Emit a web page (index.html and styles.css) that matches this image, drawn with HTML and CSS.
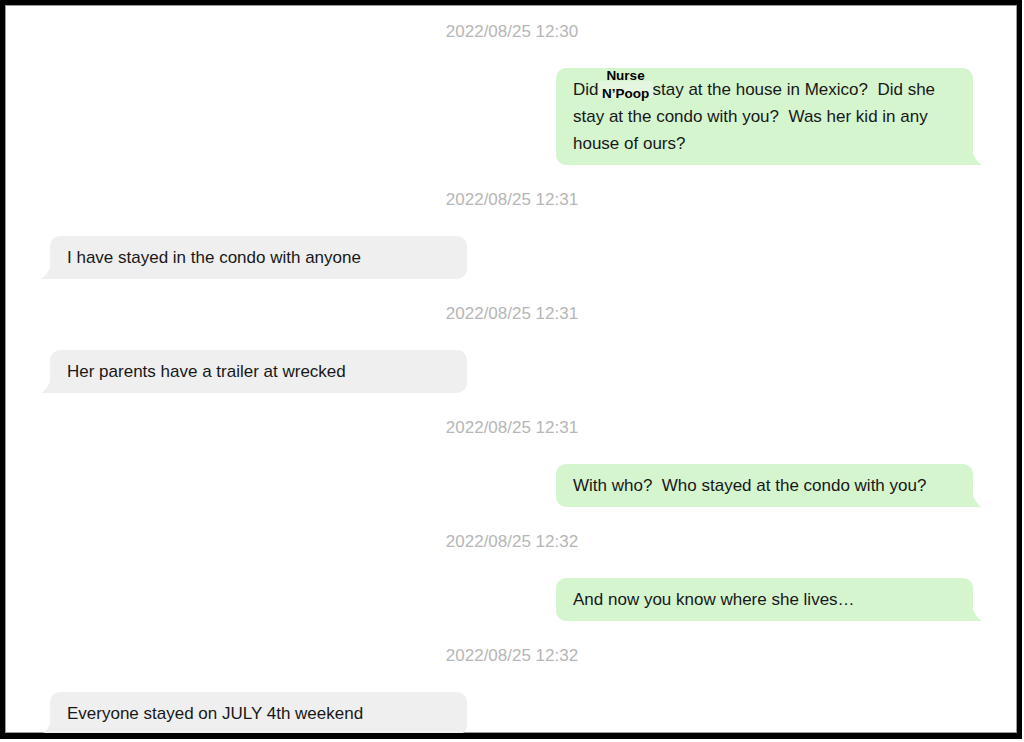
FILE: index.html
```html
<!DOCTYPE html>
<html>
<head>
<meta charset="utf-8">
<link rel="stylesheet" href="styles.css">
</head>
<body>
<div class="frame">
  <div class="thread">
    <div class="ts">2022/08/25 12:30</div>
    <div class="msg out">Did<span class="redact"><span class="label">Nurse<br>N’Poop</span></span>stay at the house in Mexico?&nbsp; Did she<br>stay at the condo with you?&nbsp; Was her kid in any<br>house of ours?</div>
    <div class="ts">2022/08/25 12:31</div>
    <div class="msg in">I have stayed in the condo with anyone</div>
    <div class="ts">2022/08/25 12:31</div>
    <div class="msg in">Her parents have a trailer at wrecked</div>
    <div class="ts">2022/08/25 12:31</div>
    <div class="msg out">With who?&nbsp; Who stayed at the condo with you?</div>
    <div class="ts">2022/08/25 12:32</div>
    <div class="msg out">And now you know where she lives…</div>
    <div class="ts">2022/08/25 12:32</div>
    <div class="msg in">Everyone stayed on JULY 4th weekend</div>
  </div>
</div>
</body>
</html>
```

FILE: styles.css
```css
html, body {
  margin: 0;
  padding: 0;
  background: #ffffff;
}
.frame {
  box-sizing: border-box;
  width: 1022px;
  height: 739px;
  border: 5px solid #000;
  border-bottom-width: 6px;
  background: #fff;
  overflow: hidden;
  box-shadow: inset 0 0 0 1px #9a9a9a;
}
.thread {
  display: flex;
  flex-direction: column;
  padding: 16px 44px 0 45px;
  font-family: "Liberation Sans", Arial, sans-serif;
}
.ts {
  height: 20px;
  line-height: 22px;
  font-size: 17px;
  color: #b6b6b6;
  text-align: center;
  padding-left: 1px;
}
.msg {
  position: relative;
  box-sizing: border-box;
  width: 417px;
  margin: 27px 0 24px;
  padding: 8px 17px;
  font-size: 17px;
  line-height: 27px;
  color: #181818;
  border-radius: 10px;
}
.msg.out {
  align-self: flex-end;
  background: #d5f5cf;
  border-bottom-right-radius: 0;
}
.msg.in {
  align-self: flex-start;
  background: #efefef;
  border-bottom-left-radius: 0;
}
.msg::after {
  content: "";
  position: absolute;
  bottom: 0;
  width: 10px;
  height: 18px;
}
.msg.out::after {
  right: -9px;
  background: #d5f5cf;
  clip-path: path("M0 0 C0.5 8 4 14 10 18 L0 18 Z");
}
.msg.in::after {
  left: -9px;
  background: #efefef;
  clip-path: path("M10 0 C9.5 8 6 14 0 18 L10 18 Z");
}
.redact {
  position: relative;
  display: inline-block;
  width: 54px;
  height: 17px;
  vertical-align: -3px;
  background: #e4f5e0;
}
.label {
  position: absolute;
  left: 50%;
  top: -14px;
  transform: translateX(-50%);
  font-weight: bold;
  font-size: 13.5px;
  line-height: 18px;
  color: #000;
  text-align: center;
  white-space: nowrap;
}
```
